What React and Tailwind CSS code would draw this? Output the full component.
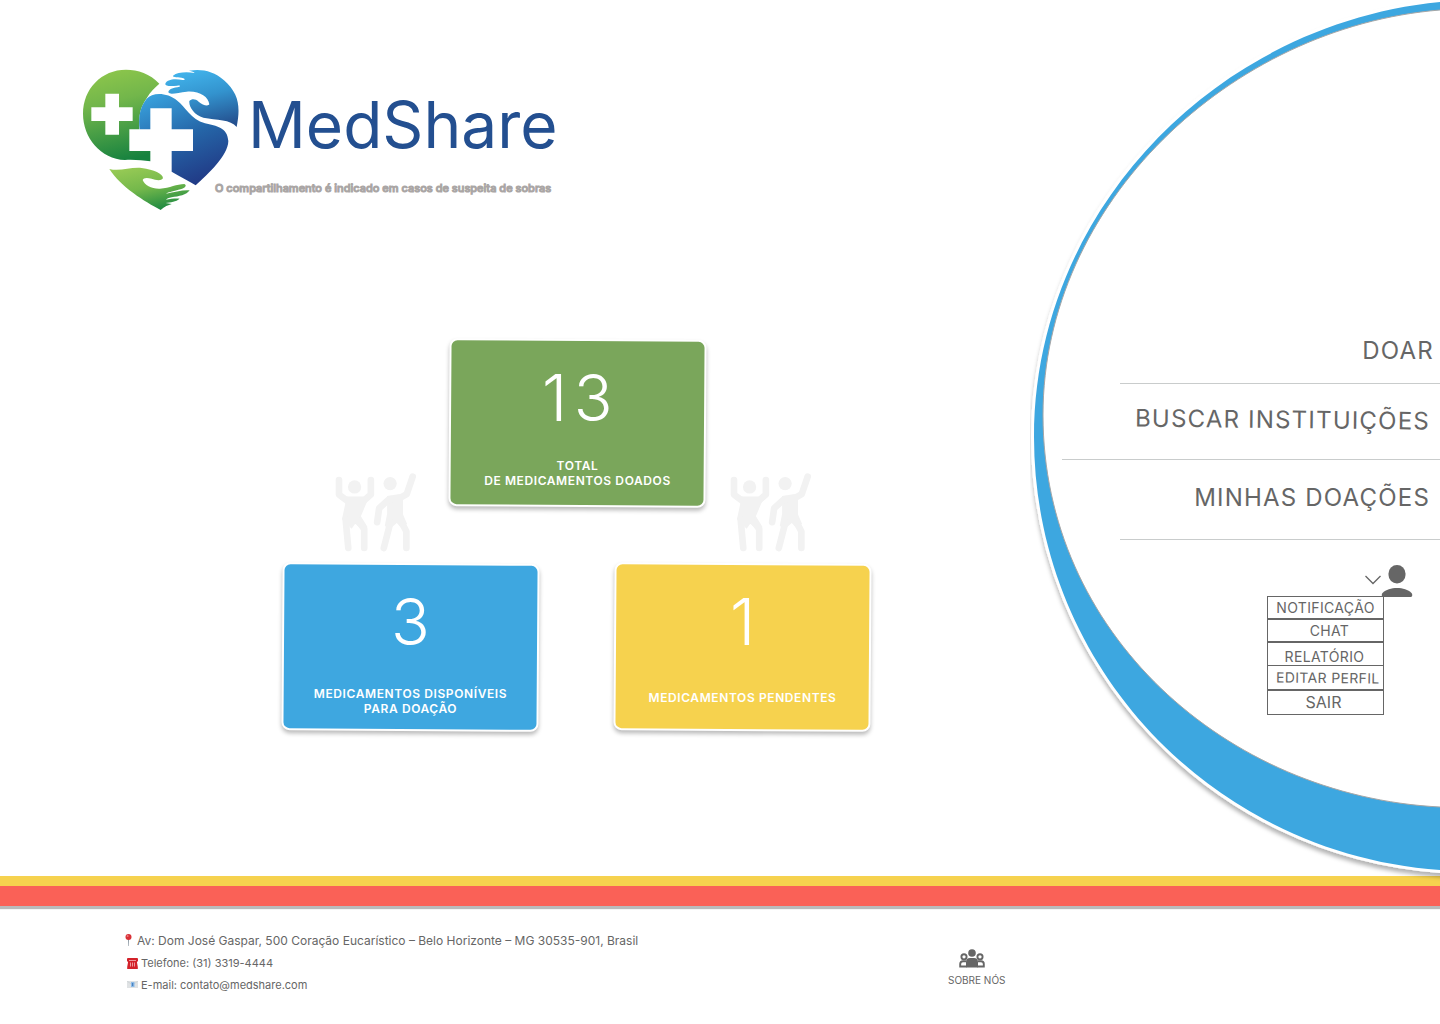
import React from "react";

function Logo() {
  return (
    <svg viewBox="36 42 474 426" className="h-[142px] w-[158px] shrink-0" role="img" aria-label="MedShare">
      <defs>
        <linearGradient id="leaf" x1="0.3" y1="0" x2="0.5" y2="1">
          <stop offset="0" stopColor="#8dc64b" />
          <stop offset="0.35" stopColor="#72b64b" />
          <stop offset="1" stopColor="#17823f" />
        </linearGradient>
        <linearGradient id="sea" x1="0.2" y1="0" x2="0.6" y2="1">
          <stop offset="0" stopColor="#38a0dc" />
          <stop offset="0.5" stopColor="#2566a8" />
          <stop offset="1" stopColor="#213a86" />
        </linearGradient>
        <linearGradient id="sky" x1="0.4" y1="0" x2="0.7" y2="1">
          <stop offset="0" stopColor="#41b2ea" />
          <stop offset="0.45" stopColor="#3393ce" />
          <stop offset="1" stopColor="#24508f" />
        </linearGradient>
        <linearGradient id="palm" x1="0.2" y1="0" x2="0.6" y2="1">
          <stop offset="0" stopColor="#97ca55" />
          <stop offset="0.5" stopColor="#74b84b" />
          <stop offset="1" stopColor="#1f8a41" />
        </linearGradient>
      </defs>
      <path
        fill="url(#leaf)"
        fillRule="evenodd"
        d="M268 86C240 56 204 44 168 44C95 44 39 101 39 176C39 248 92 312 165 315C195 313 218 317 241 319V288H178V223H208C205 182 212 155 230 130C241 110 255 97 268 86ZM106 116H147V157H188V198H147V239H106V198H64V157H106Z"
      />
      <path
        fill="url(#sea)"
        d="M241 160H305V223H369V288H305V350C330 364 352 376 377 391C412 358 474 304 475 258C472 216 440 214 405 205C362 192 346 155 322 137C290 111 247 112 230 131C208 158 205 190 209 223H241Z"
      />
      <path
        fill="url(#sky)"
        d="M500 216C512 155 507 116 462 76C430 47 394 41 357 47C366 49 374 51 373 54C348 50 322 52 309 62C306 68 324 66 340 70C346 73 345 75 338 75C312 69 290 74 286 86C284 95 304 94 322 92C334 91 332 95 322 97C305 99 296 104 295 112C300 121 325 112 350 110C388 107 415 125 418 148C414 155 397 150 386 140C376 131 365 131 358 138C356 155 373 180 400 188C440 196 482 192 500 216Z"
      />
      <path
        fill="url(#palm)"
        d="M118 342C150 350 180 336 215 339C252 345 279 355 279 370C272 380 255 374 245 371C230 367 220 368 218 375C224 391 245 402 270 401C300 399 320 387 343 387C354 392 342 402 325 404C305 410 293 411 288 416C315 411 338 404 359 406C350 420 326 424 305 427C296 429 290 431 288 434C301 432 315 430 329 431C318 441 302 441 287 444C292 446 299 445 305 447C295 451 283 454 272 465C225 440 152 396 118 342Z"
      />
    </svg>
  );
}

function People({ className }) {
  return (
    <svg viewBox="45 38 244 236" className={`h-[79px] w-[81px] self-end ${className}`} fill="none" stroke="#f2f2f2" strokeLinecap="round" strokeLinejoin="round" aria-hidden="true">
      <g fill="#f2f2f2" stroke="none">
        <circle cx="104" cy="79" r="20" />
        <circle cx="211" cy="69" r="20" />
        <path d="M76 108H138L143 120L123 167L143 200L133 214L106 190L95 205L66 176L76 130Z" />
        <path d="M202 106L240 100L250 112V162L262 190L246 204L231 188L208 208L195 196L202 160Z" />
      </g>
      <g strokeWidth="20">
        <path d="M57 58V102L84 122" />
        <path d="M153 58V102L130 122" />
        <path d="M77 176L85 263" />
        <path d="M112 178L133 206V263" />
        <path d="M279 48L261 101L240 113L208 116L178 143L172 185" />
        <path d="M212 185L192 263" />
        <path d="M238 170L260 213V263" />
      </g>
    </svg>
  );
}

function StatCard({ value, color, valueClass = "", labelClass = "pt-1", children }) {
  return (
    <section className="grid h-[164px] w-[253px]">
      <div className={`col-start-1 row-start-1 rotate-[0.4deg] rounded-md shadow-[0_0_0_2px_#ffffff,0_3px_4px_2px_rgba(0,0,0,0.27)] ${color}`} />
      <div className="z-10 col-start-1 row-start-1 flex flex-col items-center text-center text-white">
        <p className={`mt-[18px] text-[64px] leading-[78px] font-light ${valueClass}`}>{value}</p>
        <h2 className={`flex flex-1 flex-col justify-center text-xs leading-[15px] font-semibold tracking-wider ${labelClass}`}>{children}</h2>
      </div>
    </section>
  );
}

function Ring() {
  return (
    <svg viewBox="0 0 410 884" className="pointer-events-none absolute top-0 right-0 h-[884px] w-[410px] overflow-hidden" aria-hidden="true">
      <defs>
        <filter id="ringShadow" x="-5%" y="-5%" width="110%" height="110%">
          <feDropShadow dx="0" dy="4" stdDeviation="2" floodOpacity="0.3" />
        </filter>
      </defs>
      <path
        d="M420 1L410 2C185 24 4 212 4 437C4 665 182 854 410 870L420 871Z"
        fill="#3ea7e0"
        stroke="#fff"
        strokeWidth="6"
        paintOrder="stroke"
        filter="url(#ringShadow)"
      />
      <path
        d="M430 9L410 10C201 27 13 203 13 415C13 632 195 796 410 807L430 808Z"
        fill="#fff"
        stroke="#a6a6a6"
        strokeWidth="1"
      />
    </svg>
  );
}

function Navigation() {
  const item = "border border-[#666] text-sm tracking-wide cursor-pointer";
  return (
    <aside className="relative z-10 w-[410px] shrink-0 text-[#666]">
      <Ring />
      <nav className="relative pt-[335px]" aria-label="Principal">
        <ul className="flex flex-col items-end text-2xl leading-8 tracking-wider">
          <li className="flex h-[49px] w-80 justify-end border-b border-[#c9cccc] pr-1.5">
            <a href="#doar">DOAR</a>
          </li>
          <li className="flex h-19 w-[378px] items-center justify-end border-b border-[#c9cccc] pr-2.5 pb-1">
            <a href="#instituicoes" className="rotate-[0.6deg]">BUSCAR INSTITUIÇÕES</a>
          </li>
          <li className="flex h-20 w-80 items-center justify-end border-b border-[#c9cccc] pr-2.5 pb-1">
            <a href="#doacoes">MINHAS DOAÇÕES</a>
          </li>
        </ul>
        <button type="button" aria-label="Minha conta" aria-expanded="true" className="mt-6 mr-[27px] ml-auto flex h-8 cursor-pointer items-center">
          <svg viewBox="0 0 16 10" className="h-[10px] w-4" fill="none" stroke="#666" strokeWidth="1.3" aria-hidden="true">
            <path d="M0.5 1L8 8.5L15.5 1" />
          </svg>
          <svg viewBox="0 0 32 33" className="h-[33px] w-8" fill="#666" aria-hidden="true">
            <rect x="7.5" y="1" width="17" height="18.500" rx="8.500" />
            <path d="M2.500 33C0.500 33 0.300 30.500 1.500 29C8 22.300 24 22.300 30.500 29C31.700 30.500 31.500 33 29.500 33Z" />
          </svg>
        </button>
        <div className="mr-14 ml-auto flex w-[117px] flex-col">
          <button type="button" className={`h-[23px] ${item}`}>NOTIFICAÇÃO</button>
          <button type="button" className={`h-[23px] pl-2 ${item}`}>CHAT</button>
          <button type="button" className={`h-6 pt-1 pr-0.5 ${item}`}>RELATÓRIO</button>
          <button type="button" className={`-mt-px h-[25px] pl-1 whitespace-nowrap ${item}`}>
            <span className="inline-block rotate-[0.6deg]">EDITAR PERFIL</span>
          </button>
          <button type="button" className="h-[25px] cursor-pointer border border-[#666] pr-1 pb-0.5 text-base leading-5">SAIR</button>
        </div>
      </nav>
    </aside>
  );
}

function Footer() {
  return (
    <footer className="flex text-[#666]">
      <address className="w-[948px] pt-6 pl-[124px] text-[11px] leading-[22px] not-italic">
        <p className="flex items-center gap-1 text-xs leading-[22px]">
          <svg viewBox="0 0 9 14" className="-mt-0.5 h-[14px] w-[9px]" aria-hidden="true">
            <path d="M4 6H5L4.800 13H4.200Z" fill="#8b98a3" />
            <circle cx="4.500" cy="4" r="3" fill="#d93036" />
            <circle cx="3.600" cy="3" r="1" fill="#ee7b7f" />
          </svg>
          Av: Dom José Gaspar, 500 Coração Eucarístico – Belo Horizonte – MG 30535-901, Brasil
        </p>
        <p className="flex items-center gap-[3px] pl-[3px]">
          <svg viewBox="0 0 11 11" className="h-[11px] w-[11px]" aria-hidden="true">
            <path d="M0 1Q0 0 1 0H10Q11 0 11 1V3.500H10V4.500L10.800 9V11H0.200V9L1 4.500V3.500H0Z" fill="#d3222a" />
            <path d="M2 2.500H9M3.500 4.500V8.500M5.500 4.500V8.500M7.500 4.500V8.500" stroke="#f6b8ba" strokeWidth="0.8" />
          </svg>
          Telefone: (31) 3319-4444
        </p>
        <p className="flex items-center gap-[3px] pl-[3px]">
          <svg viewBox="0 0 11 8" className="h-2 w-[11px]" aria-hidden="true">
            <rect width="11" height="7" rx="0.500" fill="#dfe2e4" />
            <path d="M0 0L5.500 4L11 0" fill="none" stroke="#c4c9cd" strokeWidth="0.600" />
            <rect x="4" y="1" width="3.500" height="5" fill="#8dbbe8" />
            <path d="M5.700 2V5" stroke="#3974b4" />
          </svg>
          E-mail: contato@medshare.com
        </p>
      </address>
      <a href="#sobre" className="mt-[43px] flex flex-col items-center text-[10px] leading-4">
        <svg viewBox="0 0 26 19" className="mr-2.5 mb-1 h-[19px] w-[26px]" fill="#666" aria-hidden="true">
          <circle cx="13" cy="4" r="3.800" />
          <path d="M7 18.500V13Q7 9 11 9H15Q19 9 19 13V18.500Z" />
          <g fill="none" stroke="#666" strokeWidth="1.900">
            <circle cx="5" cy="7.800" r="2.600" />
            <circle cx="21" cy="7.800" r="2.600" />
            <path d="M7 12.300H4Q1.200 12.300 1.200 15V17.500H7.500M19 12.300H22Q24.800 12.300 24.800 15V17.500H18.500" />
          </g>
        </svg>
        SOBRE NÓS
      </a>
    </footer>
  );
}

export default function App() {
  return (
    <div className="min-h-screen overflow-x-hidden bg-white font-['Inter',sans-serif]">
      <div className="flex min-h-[876px]">
        <main className="min-w-0 flex-1 pt-[69px]">
          <header className="flex pl-[82px]">
            <Logo />
            <div className="ml-2 pt-[17px] whitespace-nowrap">
              <h1 className="text-[64px] leading-[78px] text-[#234f90]">MedShare</h1>
              <p className="mt-4 -ml-[33px] text-[11px] leading-4 font-medium text-[#aaa6a5] [-webkit-text-stroke:1px_#aaa6a5]">
                O compartilhamento é indicado em casos de suspeita de sobras
              </p>
            </div>
          </header>
          <div className="mt-[130px] ml-[284px] w-[585px]">
            <div className="flex h-[211px] items-start pl-[51px]">
              <People className="mr-[35px]" />
              <StatCard value="13" color="bg-[#7aa65b]" valueClass="pl-1.5 tracking-widest">
                <span>TOTAL</span>
                <span>DE MEDICAMENTOS DOADOS</span>
              </StatCard>
              <People className="ml-[26px]" />
            </div>
            <div className="mt-[13px] flex justify-between">
              <StatCard value="3" color="bg-[#3ea7e0]" labelClass="pt-3">
                <span>MEDICAMENTOS DISPONÍVEIS</span>
                <span>PARA DOAÇÃO</span>
              </StatCard>
              <StatCard value="1" color="bg-[#f6d24e]">
                <span>MEDICAMENTOS PENDENTES</span>
              </StatCard>
            </div>
          </div>
        </main>
        <Navigation />
      </div>
      <div className="h-[10px] bg-[#f6d24e]" />
      <div className="h-5 bg-[#fa6157] shadow-[0_3px_1px_rgba(0,0,0,0.27)]" />
      <Footer />
    </div>
  );
}
